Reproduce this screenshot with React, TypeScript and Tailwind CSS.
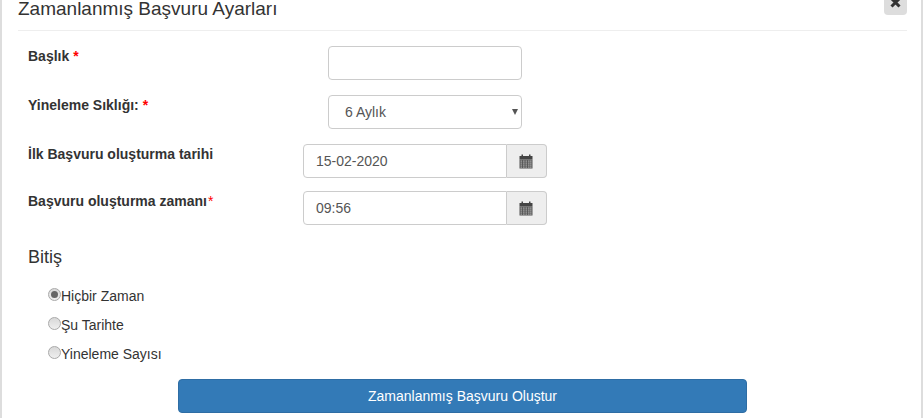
import React from "react";

function Cal() {
  return (
    <svg width="14" height="15" viewBox="0 0 14 15" className="block">
      <rect x="0.5" y="2" width="13" height="3.5" fill="#444" />
      <rect x="2.5" y="0.5" width="1.5" height="2.5" fill="#444" />
      <rect x="10" y="0.5" width="1.5" height="2.5" fill="#444" />
      <rect x="0.5" y="5.5" width="13" height="9" fill="#555" />
      <g fill="#a8a8a8">
        {[1.5, 4, 6.5, 9, 11].map((x) =>
          [6.5, 8.5, 10.5, 12.5].map((y) => <rect key={`${x}-${y}`} x={x} y={y} width="1.6" height="1.2" />)
        )}
      </g>
    </svg>
  );
}

function Radio({ label, checked }: { label: string; checked?: boolean }) {
  return (
    <div className="flex h-[29px] items-center text-[14px] text-[#333]">
      <span className="relative -top-[2px] flex h-[13px] w-[13px] items-center justify-center rounded-full border border-[#a9a9a9] bg-gradient-to-b from-[#d8d8d8] to-[#efefef]">
        {checked && <span className="h-[7px] w-[7px] rounded-full bg-[#666]" />}
      </span>
      <span>{label}</span>
    </div>
  );
}

function DateRow({ label, value, star }: { label: string; value: string; star?: boolean }) {
  return (
    <div className="flex">
      <div className="w-[275px] font-bold text-[14px] leading-[20px] text-[#333]">
        {label}
        {star && <span className="ml-[1px] font-normal text-[#ff0000]">*</span>}
      </div>
      <div className="flex h-[34px] w-[244px]">
        <div className="flex h-[34px] w-[204px] items-center rounded-l-[4px] border border-[#ccc] bg-white pl-[12px] text-[14px] text-[#555]">
          {value}
        </div>
        <div className="flex h-[34px] w-[40px] items-center justify-center rounded-r-[4px] border border-l-0 border-[#ccc] bg-[#eeeeee] pr-[2px]">
          <Cal />
        </div>
      </div>
    </div>
  );
}

export default function App() {
  return (
    <div className="h-[418px] w-[923px] overflow-hidden bg-white [font-family:'Liberation_Sans',Arial,sans-serif]">
      <div className="h-full w-[923px] border-x-2 border-[#dddddd] pl-[16px] pr-[14px]">
        <div className="box-content flex h-[30px] items-start justify-between border-b border-[#eeeeee]">
          <h4 className="text-[19px] leading-[18px] text-[#333]">Zamanlanmış Başvuru Ayarları</h4>
          <div className="flex h-[15px] w-[23px] items-start justify-center overflow-hidden rounded-b-[4px] bg-[#dddddd]">
            <svg width="11" height="11" viewBox="0 0 11 11" className="-mt-[3px] shrink-0">
              <path d="M1.5 1.5L9.5 9.5M9.5 1.5L1.5 9.5" stroke="#333" strokeWidth="3" />
            </svg>
          </div>
        </div>

        <div className="pl-[10px]">
          <div className="mt-[15px] flex">
            <div className="w-[300px] text-[14px] font-bold leading-[20px] text-[#333]">
              Başlık <span className="text-[#ff0000]">*</span>
            </div>
            <div className="h-[34px] w-[194px] rounded-[4px] border border-[#ccc] bg-white" />
          </div>

          <div className="mt-[15px] flex">
            <div className="w-[300px] text-[14px] font-bold leading-[20px] text-[#333]">
              Yineleme Sıklığı: <span className="text-[#ff0000]">*</span>
            </div>
            <div className="relative flex h-[34px] w-[194px] items-center rounded-[4px] border border-[#ccc] bg-white pl-[16px] text-[14px] text-[#555]">
              6 Aylık
              <span className="absolute right-[3px] top-[13px] h-0 w-0 border-x-[3.5px] border-t-[6px] border-x-transparent border-t-[#555]" />
            </div>
          </div>

          <div className="mt-[15px]">
            <DateRow label="İlk Başvuru oluşturma tarihi" value="15-02-2020" />
          </div>
          <div className="mt-[13px]">
            <DateRow label="Başvuru oluşturma zamanı" value="09:56" star />
          </div>

          <div className="mt-[21px] text-[18px] leading-[22px] text-[#333]">Bitiş</div>

          <div className="mt-[14px] pl-[20px]">
            <Radio label="Hiçbir Zaman" checked />
            <Radio label="Şu Tarihte" />
            <Radio label="Yineleme Sayısı" />
          </div>
        </div>

        <div className="ml-[160px] mt-[10px] flex h-[34px] w-[569px] items-center justify-center rounded-[4px] border border-[#2e6da4] bg-[#337ab7] text-[14px] text-white">
          Zamanlanmış Başvuru Oluştur
        </div>
      </div>
    </div>
  );
}
